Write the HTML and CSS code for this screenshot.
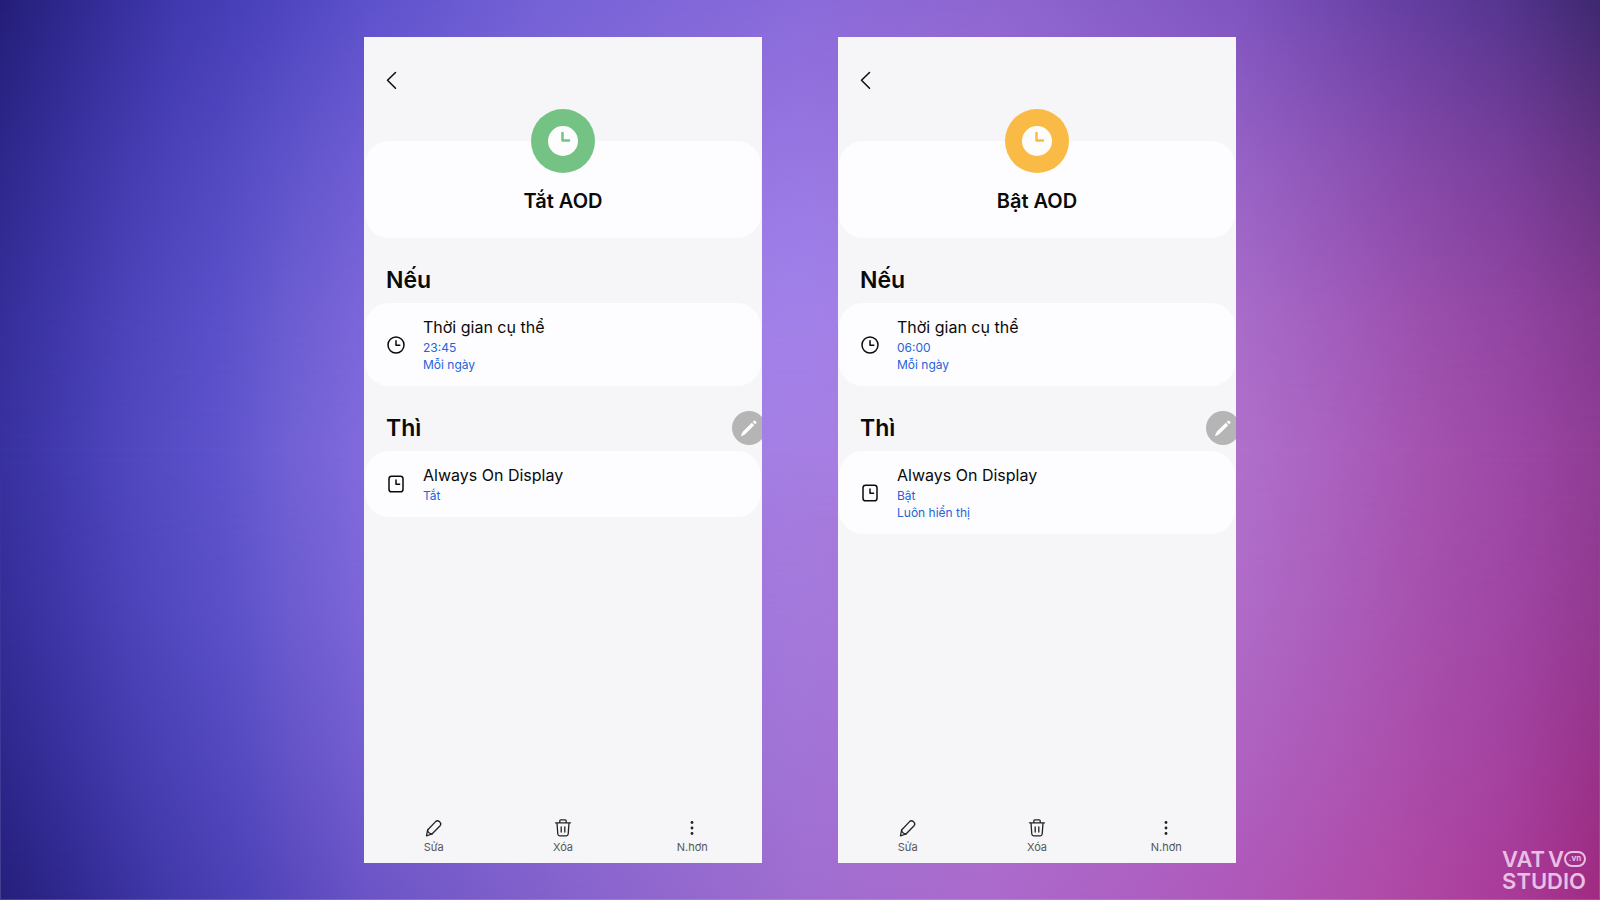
FILE: index.html
```html
<!DOCTYPE html>
<html lang="vi">

<head>
    <meta charset="UTF-8">
    <meta name="viewport" content="width=device-width, initial-scale=1.0">
    <title>Always On Display</title>
    <link rel="stylesheet" href="styles.css">
</head>

<body>
    <!-- shared icons -->
    <svg class="sprite" aria-hidden="true">
        <symbol id="back" viewBox="0 0 20 20">
            <path d="M13.500 2.500 5.500 10.300l8 8" />
        </symbol>
        <symbol id="clock" viewBox="0 0 20 20">
            <circle cx="10" cy="10" r="8" />
            <path d="M10 5.700v4.600h3.800" />
        </symbol>
        <symbol id="display" viewBox="0 0 20 20">
            <rect x="3" y="2.200" width="14" height="15.600" rx="2.600" />
            <path d="M10 6v4.200h3.600" />
        </symbol>
        <symbol id="edit" viewBox="0 0 20 20">
            <path d="M2.500 17.800 3.600 12 11.600 3.600q1.900-1.700 3.700-.1l.6.600q1.700 1.800.2 3.600L8 16z" />
            <path d="M3.600 12q.2 3.400 4.400 4" />
        </symbol>
        <symbol id="trash" viewBox="0 0 20 20">
            <path d="M2.500 4.800h15M6.800 4.600V2.800q0-1 1-1h4.400q1 0 1 1v1.800M4 5l.8 11q.2 1.900 2 1.900h6.400q1.800 0 2-1.900L16 5M8.200 9v5M11.800 9v5" />
        </symbol>
        <symbol id="more" viewBox="0 0 20 20">
            <circle cx="10" cy="4.500" r="1.400" />
            <circle cx="10" cy="10" r="1.400" />
            <circle cx="10" cy="15.500" r="1.400" />
        </symbol>
        <symbol id="pen" viewBox="0 0 20 20">
            <path d="M2 18.200q.6-2.600 2-4.600L12.800 4.800l2.400 2.400L6.400 16Q4.600 17.500 2 18.200z" />
            <path d="m13.700 3.900 1.200-1.200q.6-.5 1.200 0l1.200 1.200q.5.600 0 1.200l-1.200 1.200z" />
        </symbol>
    </svg>

    <main class="stage">
        <section class="phone">
            <header class="topbar">
                <button type="button" class="back" aria-label="Quay lại"><svg class="icon"><use href="#back" /></svg></button>
            </header>
            <div class="hero">
                <svg class="badge green" viewBox="0 0 64 64" aria-hidden="true">
                    <circle class="disc" cx="32" cy="32" r="32" />
                    <circle class="face" cx="32" cy="32" r="15" />
                    <path class="hands" d="M31.500 24v7.500h6.500" />
                </svg>
                <h1>Tắt AOD</h1>
            </div>

            <div class="section-head">
                <h2>Nếu</h2>
            </div>
            <div class="card">
                <svg class="icon"><use href="#clock" /></svg>
                <div class="text">
                    <h3>Thời gian cụ thể</h3>
                    <p>23:45</p>
                    <p>Mỗi ngày</p>
                </div>
            </div>

            <div class="section-head">
                <h2>Thì</h2>
                <button type="button" class="pen" aria-label="Bút"><svg><use href="#pen" /></svg></button>
            </div>
            <div class="card">
                <svg class="icon"><use href="#display" /></svg>
                <div class="text">
                    <h3>Always On Display</h3>
                    <p>Tắt</p>
                </div>
            </div>

            <footer class="actions">
                <button type="button"><svg class="icon"><use href="#edit" /></svg>Sửa</button>
                <button type="button"><svg class="icon"><use href="#trash" /></svg>Xóa</button>
                <button type="button"><svg class="icon dots"><use href="#more" /></svg>N.hơn</button>
            </footer>
        </section>

        <section class="phone">
            <header class="topbar">
                <button type="button" class="back" aria-label="Quay lại"><svg class="icon"><use href="#back" /></svg></button>
            </header>
            <div class="hero">
                <svg class="badge orange" viewBox="0 0 64 64" aria-hidden="true">
                    <circle class="disc" cx="32" cy="32" r="32" />
                    <circle class="face" cx="32" cy="32" r="15" />
                    <path class="hands" d="M31.500 24v7.500h6.500" />
                </svg>
                <h1>Bật AOD</h1>
            </div>

            <div class="section-head">
                <h2>Nếu</h2>
            </div>
            <div class="card">
                <svg class="icon"><use href="#clock" /></svg>
                <div class="text">
                    <h3>Thời gian cụ thể</h3>
                    <p>06:00</p>
                    <p>Mỗi ngày</p>
                </div>
            </div>

            <div class="section-head">
                <h2>Thì</h2>
                <button type="button" class="pen" aria-label="Bút"><svg><use href="#pen" /></svg></button>
            </div>
            <div class="card">
                <svg class="icon"><use href="#display" /></svg>
                <div class="text">
                    <h3>Always On Display</h3>
                    <p>Bật</p>
                    <p>Luôn hiển thị</p>
                </div>
            </div>

            <footer class="actions">
                <button type="button"><svg class="icon"><use href="#edit" /></svg>Sửa</button>
                <button type="button"><svg class="icon"><use href="#trash" /></svg>Xóa</button>
                <button type="button"><svg class="icon dots"><use href="#more" /></svg>N.hơn</button>
            </footer>
        </section>
    </main>

    <div class="logo">
        <div class="logo-row">
            <span>VAT</span>
            <span class="logo-vo">V<span class="logo-o">.vn</span></span>
        </div>
        <div class="logo-row">STUDIO</div>
    </div>
</body>

</html>
```

FILE: styles.css
```css
* {
    box-sizing: border-box;
}

body {
    position: relative;
    z-index: 0;
    margin: 0;
    min-height: 100vh;
    display: flex;
    justify-content: center;
    padding: 37px 0;
    font-family: Inter, "Noto Sans", sans-serif;
    color: #0a0a0a;
    background:
        radial-gradient(ellipse 16% 34% at 50% 27%, rgba(166, 138, 242, 0.8), transparent),
        linear-gradient(90deg, #38319f 0%, #433bb0 4%, #5047bf 8%, #5f54cd 14%, #7061d5 18%, #836bdd 23%, #a57ce0 49%, #b071cc 77%, #aa60be 84%, #a553b0 89%, #9c47a5 95%, #8f3d95 100%);
}

/* darker colour bands that fade in towards the top and the bottom */
body::before,
body::after {
    content: "";
    position: absolute;
    inset: 0;
    z-index: -1;
}

body::before {
    background: linear-gradient(90deg, #241e78 0%, #332c96 6%, #4038ae 11%, #4c44bd 17%, #5d51cb 23%, #7562d6 34%, #8a6bda 50%, #8f66d0 62%, #7f55c0 77%, #6740a4 87%, #54358f 94%, #3e2870 100%);
    mask-image: linear-gradient(#000, rgba(0, 0, 0, 0.5) 18%, rgba(0, 0, 0, 0.15) 35%, transparent 50%);
}

body::after {
    background: linear-gradient(90deg, #251f7b 0%, #322a92 5%, #4037a8 10%, #4f43b8 16%, #6b54c6 23%, #8763cc 36%, #9f6dcf 50%, #ab6acb 62%, #ae58ba 77%, #b04ba8 86%, #aa3c9a 94%, #a02a80 100%);
    mask-image: linear-gradient(transparent 50%, rgba(0, 0, 0, 0.2) 68%, rgba(0, 0, 0, 0.55) 84%, #000);
    box-shadow: inset 0 0 0 1px rgba(255, 255, 255, 0.15);
}

h1, h2, h3, p {
    margin: 0;
}

button {
    border: 0;
    padding: 0;
    background: none;
    font-family: inherit;
    color: inherit;
    cursor: pointer;
}

.sprite {
    position: absolute;
    width: 0;
    height: 0;
}

.stage {
    width: 54.5%;
    display: grid;
    grid-template-columns: 1fr 1fr;
    gap: 76px;
}

.phone {
    display: flex;
    flex-direction: column;
    overflow: hidden;
    background: #f6f6f8;
}

.icon {
    display: block;
    width: 20px;
    height: 20px;
    fill: none;
    stroke: currentColor;
    stroke-width: 1.5;
    stroke-linecap: round;
    stroke-linejoin: round;
}

.topbar {
    height: 104px;
    padding: 33px 18px 0;
}

.back {
    display: block;
}

.hero {
    display: flex;
    flex-direction: column;
    align-items: center;
    margin: 0 1px;
    padding-bottom: 24px;
    border-radius: 24px;
    background: #fdfdff;
}

/* round badge straddles the top edge of the card */
.badge {
    width: 64px;
    height: 64px;
    margin-top: -32px;
    margin-bottom: 15px;
}

.green {
    color: #75c285;
}

.orange {
    color: #f9bb45;
}

.disc {
    fill: currentColor;
}

.face {
    fill: #fdfdfd;
}

.hands {
    fill: none;
    stroke: currentColor;
    stroke-width: 2.5;
    stroke-linecap: round;
    stroke-linejoin: round;
}

h1 {
    font-size: 20px;
    line-height: 26px;
    font-weight: 600;
}

.section-head {
    display: flex;
    align-items: center;
    justify-content: space-between;
    height: 65px;
    padding: 18px 0 0 22px;
}

h2 {
    font-size: 23px;
    line-height: 30px;
    font-weight: 600;
}

.pen {
    display: flex;
    align-items: center;
    justify-content: center;
    width: 34px;
    height: 34px;
    margin-right: -4px;
    border-radius: 50%;
    background: #b5b5b6;
}

.pen svg {
    width: 20px;
    height: 20px;
    fill: #fff;
}

.card {
    display: flex;
    align-items: center;
    gap: 17px;
    margin: 0 1px;
    padding: 13px 21px;
    border-radius: 24px;
    background: #fdfdff;
}

h3 {
    font-size: 16px;
    line-height: 23px;
    font-weight: 400;
}

.card p {
    font-size: 12px;
    line-height: 17px;
    color: #2563d9;
}

.actions {
    display: grid;
    grid-template-columns: repeat(3, 1fr);
    margin-top: auto;
    padding: 0 5px 8px;
}

.actions button {
    display: flex;
    flex-direction: column;
    align-items: center;
    gap: 1px;
    font-size: 11px;
    line-height: 16px;
    color: #555;
}

.actions .icon {
    color: #222;
    stroke-width: 1.3;
}

.actions .dots {
    fill: currentColor;
    stroke: none;
}

.logo {
    position: absolute;
    right: 14px;
    bottom: 8px;
    font-size: 22px;
    line-height: 22px;
    font-weight: 600;
    color: #e9bfe4;
}

.logo-row {
    display: flex;
    justify-content: space-between;
}

.logo-vo {
    display: flex;
    align-items: center;
}

.logo-o {
    width: 22px;
    height: 16px;
    border: 2px solid #e9bfe4;
    border-radius: 8px;
    font-size: 8px;
    line-height: 11px;
    font-weight: 700;
    text-align: center;
}

@media screen and (max-width: 1100px) {
    .stage {
        width: 90%;
        gap: 24px;
    }
}
```
